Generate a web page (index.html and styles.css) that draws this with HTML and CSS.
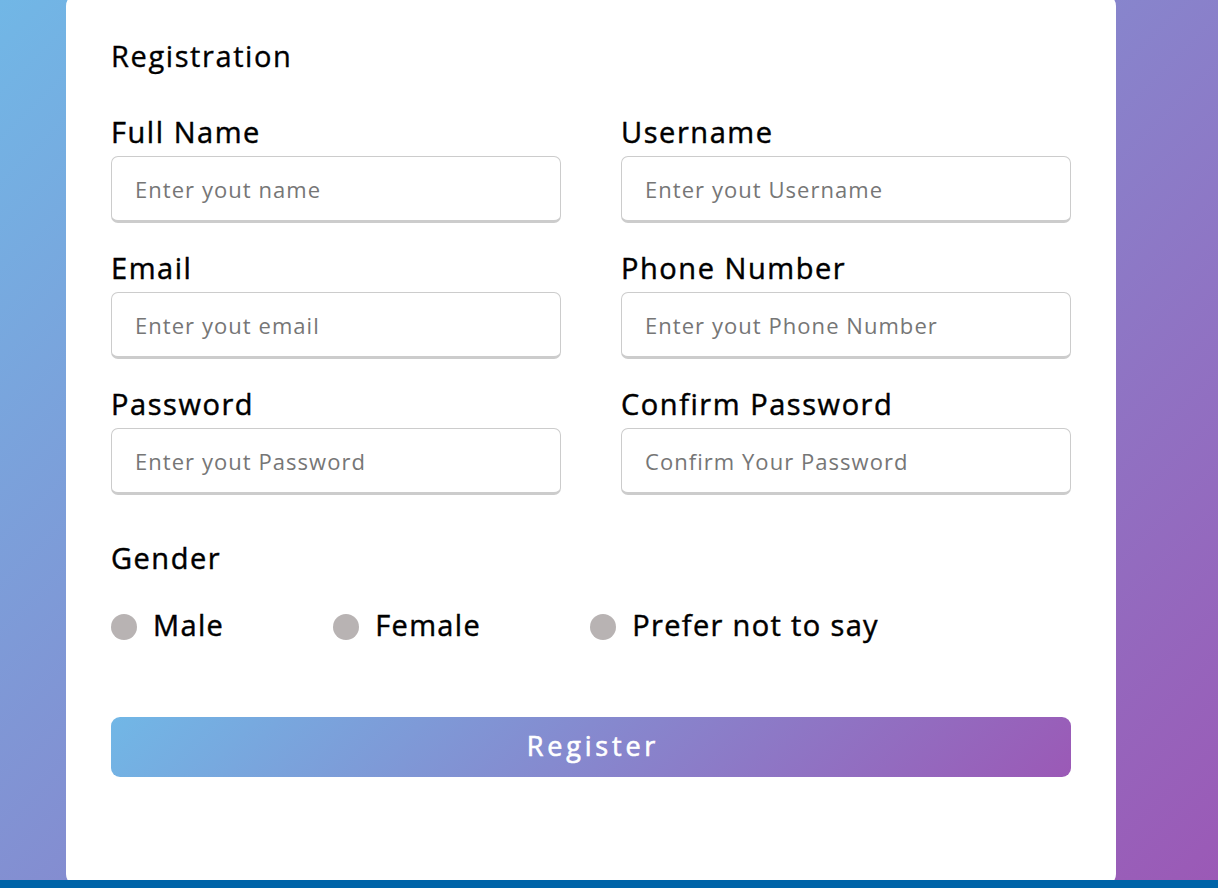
FILE: index.html
```html
<!DOCTYPE html>
<html lang="en">
<head>
<meta charset="utf-8">
<title>Registration</title>
<link rel="stylesheet" href="styles.css">
</head>
<body>
<div class="stage">
  <div class="card">
    <div class="title">Registration</div>
    <form class="form">
      <div class="details">
        <div class="field">
          <label class="label">Full Name</label>
          <input class="input" type="text" placeholder="Enter yout name">
        </div>
        <div class="field">
          <label class="label">Username</label>
          <input class="input" type="text" placeholder="Enter yout Username">
        </div>
        <div class="field">
          <label class="label">Email</label>
          <input class="input" type="text" placeholder="Enter yout email">
        </div>
        <div class="field">
          <label class="label">Phone Number</label>
          <input class="input" type="text" placeholder="Enter yout Phone Number">
        </div>
        <div class="field">
          <label class="label">Password</label>
          <input class="input" type="text" placeholder="Enter yout Password">
        </div>
        <div class="field">
          <label class="label">Confirm Password</label>
          <input class="input" type="text" placeholder="Confirm Your Password">
        </div>
      </div>
      <div class="gender">
        <div class="gender-title">Gender</div>
        <div class="category">
          <label class="option"><span class="dot"></span><span class="opt-text">Male</span></label>
          <label class="option"><span class="dot"></span><span class="opt-text">Female</span></label>
          <label class="option"><span class="dot"></span><span class="opt-text">Prefer not to say</span></label>
        </div>
      </div>
      <button type="button" class="button">Register</button>
    </form>
  </div>
</div>
<div class="strip"></div>
</body>
</html>
```

FILE: styles.css
```css
* {
  box-sizing: border-box;
}

html, body {
  margin: 0;
  padding: 0;
  height: 888px;
  overflow: hidden;
}

body {
  display: flex;
  flex-direction: column;
  font-family: "Open Sans", "Liberation Sans", sans-serif;
  color: #000;
}

.stage {
  height: 880px;
  overflow: hidden;
  background: linear-gradient(135deg, #71b7e6, #9b59b6);
  display: flex;
}

.card {
  margin-left: 66px;
  margin-top: -6px;
  width: 1050px;
  height: 892px;
  flex: none;
  background: #fff;
  border-radius: 12px;
  padding: 45px 45px 0 45px;
}

.title {
  font-size: 29px;
  line-height: 34px;
  font-weight: 400;
  letter-spacing: 1.6px;
  -webkit-text-stroke: 0.35px #000;
  margin-bottom: 42px;
}

.details {
  display: grid;
  grid-template-columns: 450px 450px;
  column-gap: 60px;
  row-gap: 28px;
}

.field {
  display: flex;
  flex-direction: column;
}

.label {
  font-size: 29px;
  line-height: 34px;
  font-weight: 500;
  letter-spacing: 1.55px;
  -webkit-text-stroke: 0.45px #000;
  margin-bottom: 7px;
}

.input {
  height: 67px;
  width: 100%;
  border: 1px solid #ccc;
  border-bottom-width: 3px;
  border-radius: 7px;
  padding-left: 23px;
  font-family: inherit;
  font-size: 22px;
  letter-spacing: 1.05px;
  color: #000;
  outline: none;
  background: #fff;
}

.input::placeholder {
  color: #767676;
}

.gender {
  margin-top: 46px;
}

.gender-title {
  font-size: 29px;
  line-height: 34px;
  font-weight: 500;
  letter-spacing: 1.5px;
  -webkit-text-stroke: 0.45px #000;
}

.category {
  display: flex;
  justify-content: space-between;
  width: 768px;
  margin-top: 33px;
}

.option {
  display: flex;
  align-items: center;
  font-size: 29px;
  line-height: 34px;
  font-weight: 500;
  letter-spacing: 1.35px;
  -webkit-text-stroke: 0.45px #000;
}

.dot {
  width: 26px;
  height: 26px;
  border-radius: 50%;
  background: #b8b3b3;
  margin-right: 16px;
  margin-top: 4px;
}

.button {
  display: block;
  margin-top: 75px;
  width: 960px;
  height: 60px;
  border: none;
  border-radius: 9px;
  background: linear-gradient(135deg, #71b7e6, #9b59b6);
  color: #fff;
  font-family: inherit;
  font-size: 27px;
  font-weight: 500;
  letter-spacing: 3.8px;
  -webkit-text-stroke: 0.6px #fff;
  padding: 0 0 4px 4px;
}

.strip {
  height: 8px;
  background: #0064a8;
}
```
